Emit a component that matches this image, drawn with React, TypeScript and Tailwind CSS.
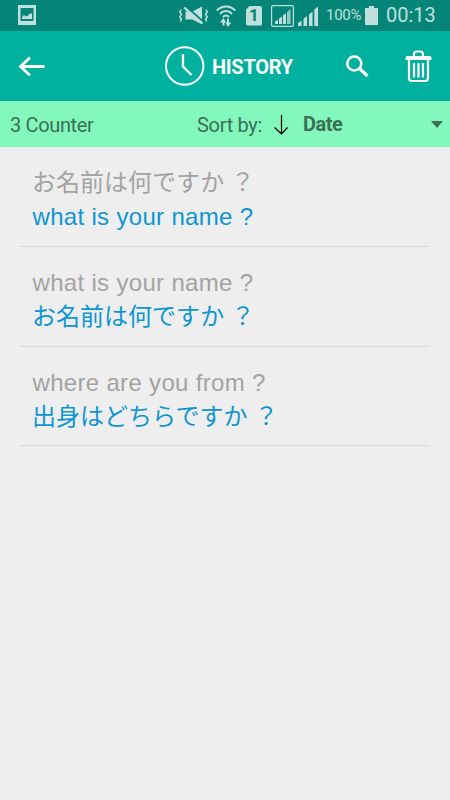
type HistoryEntry = {
  id: number
  source: string
  result: string
  sourceLang: 'en' | 'ja'
}

const entries: HistoryEntry[] = [
  { id: 1, source: 'お名前は何ですか ？', result: 'what is your name ?', sourceLang: 'ja' },
  { id: 2, source: 'what is your name ?', result: 'お名前は何ですか ？', sourceLang: 'en' },
  { id: 3, source: 'where are you from ?', result: '出身はどちらですか ？', sourceLang: 'en' },
]

function StatusBar() {
  return (
    <div className="flex h-[31px] items-center bg-[#058577] text-[#bfe0dc]">
      <svg className="ml-[18px] mt-[-1px] h-5 w-[18px] shrink-0" viewBox="0 0 18 20" fill="currentColor">
        <path fillRule="evenodd" d="M0 0h18v20H0zM2.500 3v13h13V3z" />
        <path d="M4 14v-2l2-2 2 1.500 2-1 2-2h2V14z" />
      </svg>

      {/* muted, vibrate */}
      <svg className="ml-[143px] h-5 w-[30px] shrink-0" viewBox="0 0 30 20" fill="none" stroke="currentColor">
        <path d="M2.200 3.500L.8 6l1.600 2.300L.8 11l1.600 2.300-1 2.200M26.800 3.500L28.200 6l-1.600 2.300 1.600 2.700-1.600 2.300 1 2.200" strokeWidth="1.500" />
        <path d="M6.500 5.500h7L23 .5v18l-9.500-5h-7z" fill="currentColor" stroke="none" />
        <path d="M6 0l19.500 16.500" stroke="#058577" strokeWidth="2" />
        <path d="M5.200 1.500L23.500 17.500" strokeWidth="2.200" />
      </svg>

      <svg className="ml-[7px] mt-px h-[22px] w-5 shrink-0" viewBox="0 0 20 22" fill="none" stroke="currentColor">
        <path d="M.8 5.500C6 .2 14 .2 19.200 5.500M4 8.800c3.500-3.600 8.500-3.600 12 0M7 12c1.800-1.900 4.200-1.900 6 0" strokeWidth="2" />
        <path d="M7.500 20.500v-5M12 13.500v5" strokeWidth="2" />
        <path d="M4 17.500L7.500 13l2.700 4.500zM9.300 17.500L12 22l3.500-4.500z" fill="currentColor" stroke="none" />
      </svg>

      <div className="ml-[10px] flex h-5 w-4 shrink-0 items-center justify-center rounded-[2px] bg-[#bfe0dc] text-[17px] font-bold text-[#058577] [clip-path:polygon(4px_0,100%_0,100%_100%,0_100%,0_4px)]">
        1
      </div>

      <svg className="ml-[9px] h-[22px] w-[23px] shrink-0" viewBox="0 0 23 22" fill="currentColor">
        <rect x=".6" y=".6" width="21.800" height="20.800" rx="1.500" fill="none" stroke="currentColor" strokeWidth="1.200" />
        <path d="M4 19v-2.200L7 14.500V19zM8 19v-5.200l3-2.300V19zM12 19v-8.500l3-2.300V19z" />
        <path d="M16 19V7.200L19.500 4v15z" opacity=".75" />
      </svg>
      <svg className="ml-1 h-5 w-5 shrink-0" viewBox="0 0 20 20" fill="currentColor">
        <path d="M0 20v-3l3.500-2.500V20zM5.500 20v-7.200L9 10v10zM11 20V8.500l3.500-3V20zM16.300 20V3.500L20 .5V20z" />
      </svg>

      <span className="ml-[8px] w-[35px] whitespace-nowrap text-[15px] leading-none tracking-[-0.3px]">100%</span>
      <svg className="ml-1 mt-[-1px] h-[19px] w-[13px] shrink-0" viewBox="0 0 13 19" fill="currentColor">
        <path d="M4 0h5v2h4v17H0V2h4z" />
      </svg>
      <span className="ml-2 mt-[-1px] whitespace-nowrap text-[20px] leading-none">00:13</span>
    </div>
  )
}

function Header() {
  return (
    <header className="flex h-[70px] items-center bg-[#00b19f] text-white">
      <button aria-label="Back" className="ml-[18px] shrink-0">
        <svg className="h-5 w-[27px]" viewBox="0 0 27 20" fill="none" stroke="currentColor" strokeWidth="2.800">
          <path d="M2 10.500h24.500M12 1.500l-9.500 9 9.500 9" />
        </svg>
      </button>
      <div className="ml-[120px] flex items-center">
        <svg className="h-10 w-10 shrink-0" viewBox="0 0 40 40" fill="none" stroke="currentColor" strokeWidth="2">
          <circle cx="19.700" cy="20" r="18.700" />
          <path d="M18 8v12.500l8.500 8.500" strokeWidth="2.300" />
        </svg>
        <h1 className="ml-[7px] mt-[2px] w-[82px] whitespace-nowrap text-[20px] font-bold leading-none tracking-[-0.3px]">
          HISTORY
        </h1>
      </div>
      <button aria-label="Search" className="ml-[51px] shrink-0">
        <svg className="h-[23px] w-6" viewBox="0 0 24 23" fill="none" stroke="currentColor">
          <circle cx="9.300" cy="8.500" r="7" strokeWidth="2.600" />
          <path d="M14.500 13.500l8 7.500" strokeWidth="3.200" />
        </svg>
      </button>
      <button aria-label="Delete" className="ml-9 shrink-0">
        <svg className="h-8 w-[27px]" viewBox="0 0 26 32" fill="none" stroke="currentColor" strokeWidth="2.200">
          <path d="M8.500 6V4q0-2.500 3-2.500h3q3 0 3 2.500v2" />
          <path d="M0 10V8q0-2 2-2h22q2 0 2 2v2z" fill="currentColor" stroke="none" />
          <path d="M3.500 9v19q0 3 3 3h13q3 0 3-3V9M8.500 13v14.500M13 13v14.500M17.500 13v14.500" />
        </svg>
      </button>
    </header>
  )
}

function SortBar() {
  return (
    <div className="flex h-[46px] items-center bg-[#83f8bd] text-[20px] leading-none text-[#3b7055]">
      <span className="ml-[10px] mt-[2px] w-[187px] tracking-[-0.35px]">3 Counter</span>
      <span className="mt-[2px] w-[77px] whitespace-nowrap tracking-[-0.3px]">Sort by:</span>
      <svg className="mt-px h-5 w-[14px] shrink-0" viewBox="0 0 14 20" fill="none" stroke="#000" strokeWidth="1.200">
        <path d="M7.500 0v19M.5 12.500l7 6.500 6-6.500" />
      </svg>
      <span className="ml-[15px] mt-[-1px] font-bold tracking-[-0.5px]">Date</span>
      <svg className="ml-auto mr-[7px] h-[7px] w-3" viewBox="0 0 12 7" fill="currentColor">
        <path d="M0 0h12L6 7z" />
      </svg>
    </div>
  )
}

function Phrase({ text, lang }: { text: string; lang: 'en' | 'ja' }) {
  if (lang === 'ja') {
    return (
      <span lang="ja" className="tracking-[0.02px]">
        {text}
      </span>
    )
  }
  return <span className="ml-[0.5px] tracking-[0.32px]">{text}</span>
}

export default function App() {
  return (
    <div className="h-[800px] w-[450px] overflow-hidden bg-[#eee] font-['Roboto',sans-serif]">
      <StatusBar />
      <Header />
      <SortBar />
      <ul className="px-5">
        {entries.map((entry, i) => (
          <li
            key={entry.id}
            className={`${i === 2 ? 'h-[99px]' : 'h-[100px]'} whitespace-nowrap border-b border-[#d8d8d8] pl-3 pt-[19px] font-['Liberation_Sans','Noto_Sans_CJK_JP',sans-serif] text-[24px] leading-[34px]`}
          >
            <p className="h-[34px] text-[#a3a3a3]">
              <Phrase text={entry.source} lang={entry.sourceLang} />
            </p>
            <p className="h-[34px] text-[#0e96d2]">
              <Phrase text={entry.result} lang={entry.sourceLang === 'ja' ? 'en' : 'ja'} />
            </p>
          </li>
        ))}
      </ul>
    </div>
  )
}
